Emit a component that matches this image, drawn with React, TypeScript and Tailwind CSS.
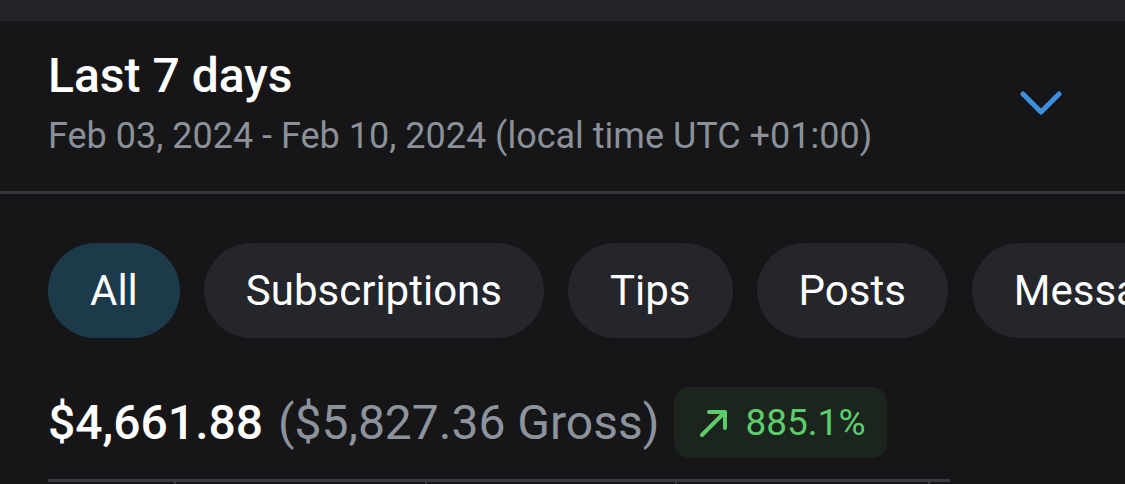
import React from 'react';

const filters = ['All', 'Subscriptions', 'Tips', 'Posts', 'Messages'];

export default function App() {
  return (
    <div className="w-[1125px] h-[484px] overflow-hidden bg-[#161618] font-['Roboto',sans-serif]">
      <div className="h-[21px] bg-[#232428]" />

      <div className="flex items-center justify-between pl-[48px] pr-[63px] pt-[31px] pb-[37px] border-b-[3px] border-[#343539]">
        <div>
          <h1 className="text-[48px] leading-none font-medium text-white">Last 7 days</h1>
          <p className="mt-[18px] text-[36px] leading-none text-[#8b9099]">
            Feb 03, 2024 - Feb 10, 2024 (local time UTC +01:00)
          </p>
        </div>
        <svg width="42" height="26" viewBox="0 0 42 26" fill="none" className="shrink-0">
          <polyline points="3,4 21,22 39,4" stroke="#3d8fe0" strokeWidth="5" strokeLinecap="round" strokeLinejoin="round" />
        </svg>
      </div>

      <div className="flex gap-[24px] pl-[48px] pt-[49px] whitespace-nowrap">
        {filters.map((f, i) => (
          <button
            key={f}
            className={`h-[95px] shrink-0 rounded-full px-[42px] text-[42px] leading-none text-white ${i === 0 ? 'bg-[#1d3a4b]' : 'bg-[#25262b]'}`}
          >
            {f}
          </button>
        ))}
      </div>

      <div className="flex items-center pl-[48px] pt-[49px] whitespace-nowrap">
        <span className="text-[48px] leading-none font-medium text-white">$4,661.88</span>
        <span className="ml-[15px] text-[48px] leading-none text-[#8d939c]">($5,827.36 Gross)</span>
        <div className="ml-[15px] h-[71px] flex items-center gap-[16px] pl-[25px] pr-[21px] rounded-[15px] bg-[#1b251e]">
          <svg width="30" height="30" viewBox="0 0 30 30" fill="none">
            <path d="M3 27 L26 4 M10 4 H26 V20" stroke="#5dcd6b" strokeWidth="4" strokeLinecap="round" strokeLinejoin="round" />
          </svg>
          <span className="text-[37px] leading-none text-[#5dcd6b]">885.1%</span>
        </div>
      </div>

      <div className="ml-[48px] mt-[21px] w-[902px] h-[3px] bg-[#3a3b40] relative">
        {[126, 377, 627, 880].map((x) => (
          <div key={x} className="absolute top-[3px] w-[2px] h-[10px] bg-[#3a3b40]" style={{ left: x }} />
        ))}
      </div>
    </div>
  );
}
